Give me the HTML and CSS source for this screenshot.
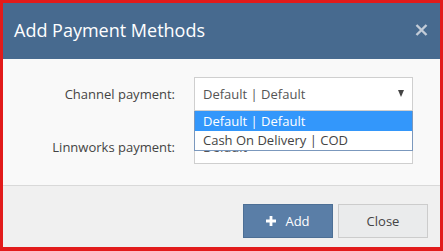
FILE: index.html
```html
<!DOCTYPE html>
<html lang="en">
<head>
    <meta charset="UTF-8">
    <meta name="viewport" content="width=device-width, initial-scale=1.0">
    <title>Add Payment Methods</title>
    <link rel="stylesheet" href="styles.css">
</head>
<body>
    <div class="modal">
        <div class="modal-header">
            <h1 class="modal-title">Add Payment Methods</h1>
            <svg class="modal-close" width="13" height="12" viewBox="0 0 13 12">
                <path d="M1.5 1l10 10M11.5 1l-10 10" stroke="#c3ccd8" stroke-width="2.4" fill="none"/>
            </svg>
        </div>

        <div class="modal-body">
            <div class="form-row">
                <label class="form-label">Channel payment:</label>
                <div class="select-wrap">
                    <div class="select">
                        <span>Default | Default</span>
                        <span class="caret"></span>
                    </div>
                    <ul class="dropdown">
                        <li class="selected">Default | Default</li>
                        <li>Cash On Delivery | COD</li>
                    </ul>
                </div>
            </div>

            <div class="form-row">
                <label class="form-label">Linnworks payment:</label>
                <div class="select-wrap">
                    <div class="select">
                        <span>Default</span>
                        <span class="caret"></span>
                    </div>
                </div>
            </div>
        </div>

        <div class="modal-footer">
            <button class="btn btn-primary">
                <svg class="plus" width="10" height="10" viewBox="0 0 10 10">
                    <path d="M3.6 0h2.8v3.6H10v2.8H6.4V10H3.6V6.4H0V3.6h3.6z" fill="#fff"/>
                </svg>
                Add
            </button>
            <button class="btn btn-default">Close</button>
        </div>
    </div>
</body>
</html>
```

FILE: styles.css
```css
:root {
    --header: #476a8f;
    --primary: #5a7ea7;
    --text: #444;
}

* {
    box-sizing: border-box;
}

body {
    margin: 0;
    font-family: 'Open Sans', Arial, sans-serif;
    background: #e31d1d;
}

.modal {
    width: 443px;
    height: 251px;
    border: 3px solid #e21b1b;
    border-bottom-width: 4px;
    display: flex;
    flex-direction: column;
    background: #f9f9f9;
}

.modal-header {
    height: 56px;
    background: var(--header);
    display: flex;
    align-items: center;
    justify-content: space-between;
    padding: 0 12px 0 11px;
}

.modal-title {
    margin: 0;
    font-size: 18px;
    font-weight: 400;
    color: #fff;
    margin-top: -2px;
}

.modal-close {
    margin-top: -2px;
}

.modal-body {
    height: 127px;
    padding: 18px 0 0 15px;
    border-bottom: 1px solid #d9d9d9;
    display: flex;
    flex-direction: column;
    gap: 19px;
}

.form-row {
    display: grid;
    grid-template-columns: 157px 219px;
    column-gap: 19px;
    align-items: center;
}

.form-label {
    text-align: right;
    font-size: 13px;
    color: #444;
}

.select-wrap {
    position: relative;
}

.select {
    height: 34px;
    border: 1px solid #cfcfcf;
    background: #fff;
    display: flex;
    align-items: center;
    justify-content: space-between;
    padding: 0 8px 0 8px;
    font-size: 13px;
    color: #555;
}

.caret {
    width: 0;
    height: 0;
    border-left: 3.5px solid transparent;
    border-right: 3.5px solid transparent;
    border-top: 7px solid #444;
    margin-top: -2px;
}

.dropdown {
    position: absolute;
    top: 34px;
    left: 0;
    width: 219px;
    margin: 0;
    padding: 0;
    list-style: none;
    background: #fff;
    border: 1px solid #7b98bd;
    border-top: none;
    z-index: 2;
}

.dropdown li {
    height: 19px;
    line-height: 19px;
    padding-left: 8px;
    font-size: 13px;
    color: #444;
}

.dropdown li.selected {
    background: #3397fb;
    color: #fff;
    height: 20px;
    line-height: 20px;
}

.modal-footer {
    flex: 1;
    display: flex;
    justify-content: flex-end;
    gap: 5px;
    padding: 18px 12px 0 0;
    background: #f0f0f0;
}

.btn {
    width: 90px;
    height: 34px;
    font-family: 'Open Sans', Arial, sans-serif;
    font-size: 13px;
    cursor: pointer;
    display: flex;
    align-items: center;
    justify-content: center;
    gap: 9px;
}

.btn-primary {
    background: var(--primary);
    border: 1px solid #4d6f95;
    color: #fff;
}

.btn-default {
    background: #eaebec;
    border: 1px solid #ccc;
    color: #444;
}
```
